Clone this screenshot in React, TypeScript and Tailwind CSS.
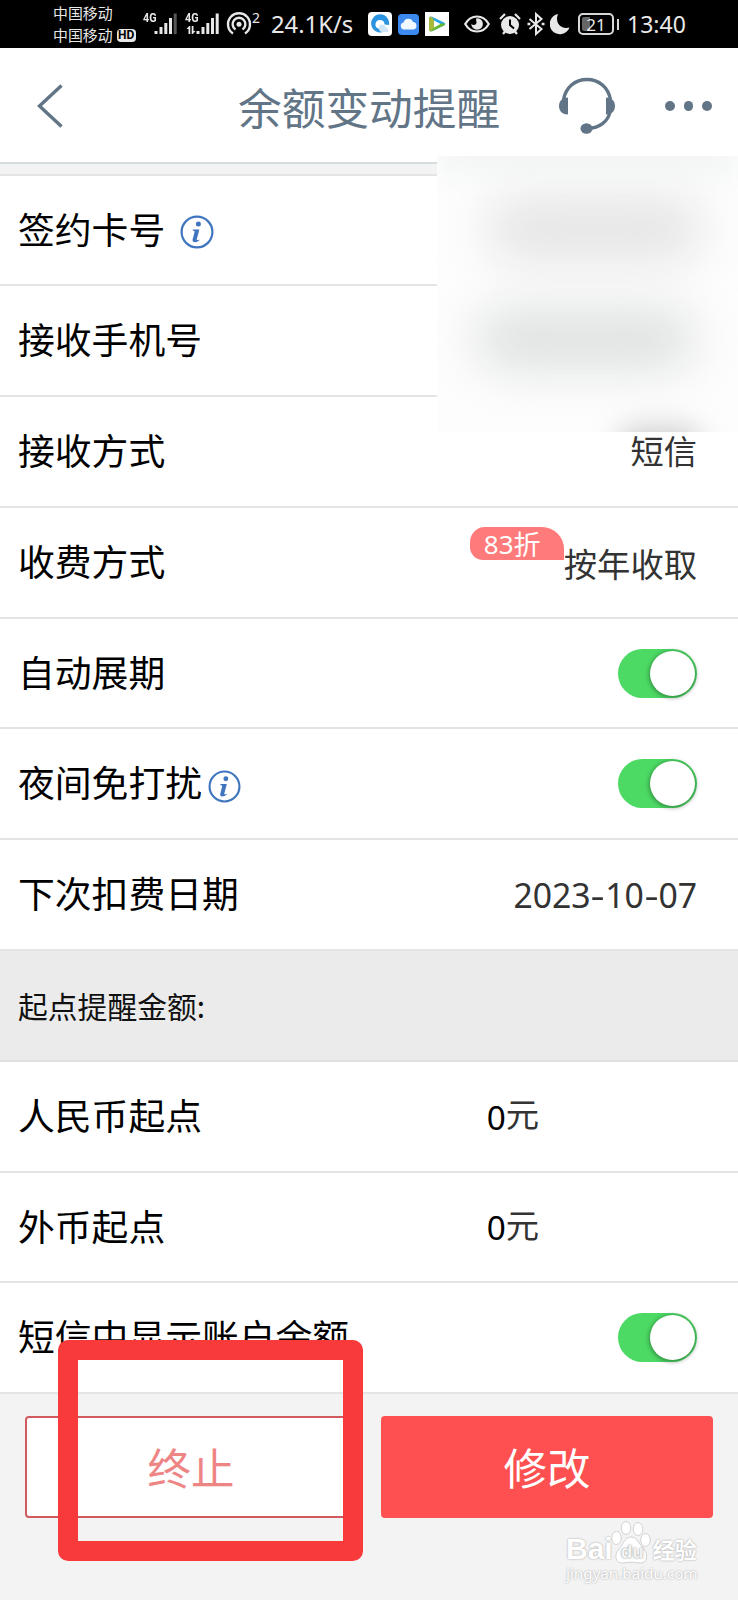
import type { ReactNode } from "react";

function InfoIcon({ className }: { className?: string }) {
  return (
    <svg viewBox="0 0 34 34" fill="none" aria-hidden className={className}>
      <circle cx="17" cy="17" r="15.4" stroke="#3f75bf" strokeWidth="2.2" />
      <circle cx="18.4" cy="9" r="2.5" fill="#3f75bf" />
      <path
        d="M12.8 14.4h6.6l-2.6 9.8c-.3 1.2.7 1.1 2.3.3l.3.8c-1.7 1.3-3 1.9-4.5 1.9-2 0-2.7-1.2-2.2-3.1l1.8-6.9c.3-1.2-.2-1.6-1.9-1.7z"
        fill="#3f75bf"
      />
    </svg>
  );
}

function HeadsetIcon({ className }: { className?: string }) {
  return (
    <svg viewBox="0 0 58 58" fill="none" aria-hidden className={className}>
      <path
        d="M5.5 23C7.5 10.5 17 2.5 29 2.5S50.5 10.5 52.5 23M52 35C50 44.5 41.5 51 30 51.5"
        stroke="#627587"
        strokeWidth="3.4"
      />
      <path d="M10 20.5v17C4.5 37.5 1 34 1 29s3.5-8.5 9-8.5z" fill="#627587" />
      <path d="M48 20.5v17c5.5 0 9-3.5 9-8.5s-3.5-8.5-9-8.5z" fill="#627587" />
      <ellipse cx="28.5" cy="51.5" rx="6" ry="5.2" fill="#627587" />
    </svg>
  );
}

function Signal({ dim }: { dim?: boolean }) {
  return (
    <svg viewBox="0 0 24 24" fill="#e8e8e8" aria-hidden className="h-6 w-6">
      <rect x="0.5" y="19" width="3" height="3" />
      <rect x="5.5" y="15" width="3" height="7" />
      <rect x="10.3" y="11" width="3" height="11" />
      <rect x="15" y="6" width="3" height="16" />
      <rect x="19.7" y="1.5" width="3" height="20.5" fill={dim ? "#555" : "#e8e8e8"} />
    </svg>
  );
}

function StatusBar() {
  return (
    <div className="flex h-12 items-center bg-black pl-[53px] text-[#e8e8e8]">
      <div className="w-[84px] text-[14.9px] leading-[22px]">
        <div>中国移动</div>
        <div className="flex items-center">
          中国移动
          <span className="ml-[4px] flex h-[13px] w-[19px] items-center justify-center rounded-[4px] bg-[#e8e8e8] font-[Roboto] text-[12px] leading-none font-bold text-black">
            HD
          </span>
        </div>
      </div>
      <div className="relative ml-[6px] w-[35px] pl-[11px]">
        <span className="absolute top-0 left-0 origin-left scale-x-90 font-[Roboto] text-[12px] leading-none font-bold">4G</span>
        <Signal dim />
      </div>
      <div className="relative ml-[7px] w-[35px] pl-[11px]">
        <span className="absolute top-0 left-0 origin-left scale-x-90 font-[Roboto] text-[12px] leading-none font-bold">4G</span>
        <svg viewBox="0 0 10 9" fill="#e8e8e8" aria-hidden className="absolute top-[14px] left-[1px] h-[8px] w-[10px]">
          <path d="M0 3.5L3 0h1.2v9H2.2V3.5zM10 5.5L7 9H5.8V0h2v5.5z" />
        </svg>
        <Signal />
      </div>
      <svg viewBox="0 0 26 24" fill="none" stroke="#e8e8e8" strokeWidth="2.4" aria-hidden className="ml-[6px] h-[24px] w-[26px] shrink-0">
        <path d="M7 21.5a11 11 0 1 1 12 0" />
        <path d="M9.5 17.5a6.4 6.4 0 1 1 7 0" />
        <circle cx="13" cy="12.3" r="2.5" fill="#e8e8e8" stroke="none" />
      </svg>
      <span className="-mt-3 w-[12px] font-['Noto_Sans'] text-[14px] leading-none">2</span>
      <span className="ml-[7px] w-[97px] pt-px font-['Noto_Sans'] text-[23.8px] leading-none">24.1K/s</span>

      <svg viewBox="0 0 24 24" aria-hidden className="size-6 shrink-0">
        <rect width="24" height="24" rx="4" fill="#fff" />
        <path d="M16 19.5A9 9 0 1 1 21 13l-4.5-.5a4.5 4.5 0 1 0-5.5 4.3z" fill="#2a94e0" />
        <path d="M11 15c1-3.5 6-3 6.5.5 2.5 0 3.5 2.5 2.5 4.5h-6c-2.5 0-3.5-3-3-5z" fill="#cfe6f8" />
      </svg>
      <svg viewBox="0 0 21 21" aria-hidden className="ml-[6px] size-[21px] shrink-0">
        <rect width="21" height="21" rx="4" fill="#3c8af0" />
        <path d="M6 15.5a3.5 3.5 0 0 1-.5-6.9 5 5 0 0 1 9.5-.6 3.8 3.8 0 0 1 .5 7.5z" fill="#f2f8ff" />
      </svg>
      <svg viewBox="0 0 24 24" aria-hidden className="ml-[6px] size-6 shrink-0">
        <rect width="24" height="24" fill="#fff" />
        <path d="M4 7q0-3.5 3.5-2L19 10.5q2.5 1.5 0 3L7.5 19Q4 20.5 4 17z" fill="#27a7e8" />
        <path d="M6 12l14-.5q.5 1-1 2L7.5 19Q4 20.5 4 17z" fill="#67b82e" />
        <path d="M4 7q0-3 2.5-2.2L9 8v8l-3 3.2q-2 0-2-2.2z" fill="#a8b93a" />
        <path d="M9 8.5l6.5 3.5L9 15.5z" fill="#fff" />
      </svg>

      <svg viewBox="0 0 26 20" fill="none" aria-hidden className="ml-[15px] h-5 w-[26px] shrink-0">
        <path d="M1.2 10C7 0 19 0 24.8 10 19 20 7 20 1.2 10z" stroke="#e8e8e8" strokeWidth="2.2" />
        <path d="M12.5 4.2a5.8 5.8 0 1 1-5.2 5.6c1.5 2.2 5.7 1.2 5.2-1.8-.2-1.4-.8-2.4 0-3.8z" fill="#e8e8e8" />
      </svg>
      <svg viewBox="0 0 24 24" fill="none" aria-hidden className="ml-[8px] size-6 shrink-0">
        <circle cx="12" cy="13" r="9" fill="#e8e8e8" />
        <path d="M2 7l5-5M22 7l-5-5M5 22l2.5-3M19 22l-2.5-3" stroke="#e8e8e8" strokeWidth="2.2" />
        <path d="M12 7.5V13l4 3.5" stroke="#000" strokeWidth="2" />
      </svg>
      <svg viewBox="0 0 18 24" fill="none" stroke="#e8e8e8" strokeWidth="2" aria-hidden className="ml-[5px] h-6 w-[18px] shrink-0">
        <path d="M2.5 7l12 10L9 22V2l5.500 5-12 10" />
        <path d="M.5 12h2.8M14.7 12h2.8" strokeWidth="2.4" />
      </svg>
      <svg viewBox="0 0 20 22" fill="#e8e8e8" aria-hidden className="ml-[5px] h-[22px] w-5 shrink-0">
        <path d="M8 1C5.5 7 8 12 11.5 13.8c2.7 1.4 5.5 1.5 8 .7A10.2 10.2 0 1 1 8 1z" />
      </svg>
      <div className="relative ml-[8px] flex h-[22px] w-[36px] shrink-0 items-center justify-center rounded-[5px] border-2 border-[#d8d8d8] font-['Noto_Sans'] text-[17px] leading-none">
        <span className="absolute inset-y-[2px] left-[2px] w-[8px] rounded-l-[2px] bg-[#666]" />
        <span className="relative">21</span>
      </div>
      <span className="ml-[3px] h-[11px] w-[2px] shrink-0 bg-[#d8d8d8]" />
      <span className="ml-[8px] pt-px font-['Noto_Sans'] text-[23px] leading-none">13:40</span>
    </div>
  );
}

function NavBar() {
  return (
    <div className="flex h-[116px] items-center border-b-2 border-[#d6dde1] bg-white pt-[2px] text-[#627587]">
      <svg viewBox="0 0 26 44" fill="none" stroke="#627587" strokeWidth="3.4" aria-hidden className="ml-[37px] h-[44px] w-[26px]">
        <path d="M24.5 1.5L2.5 22l22 20.5" />
      </svg>
      <h1 className="ml-[175px] pt-[2px] text-[43.7px] leading-none font-normal whitespace-nowrap">余额变动提醒</h1>
      <HeadsetIcon className="ml-[58px] size-[58px]" />
      <div className="ml-[49px] flex gap-[9px]">
        <span className="size-[9.5px] rounded-full bg-[#627587]" />
        <span className="size-[9.5px] rounded-full bg-[#627587]" />
        <span className="size-[9.5px] rounded-full bg-[#627587]" />
      </div>
    </div>
  );
}

function Row({ label, icon, children }: { label: string; icon?: ReactNode; children?: ReactNode }) {
  return (
    <div className="flex h-[110.8px] items-center border-b-2 border-[#e4e4e4] bg-white pr-[41px] pl-[18px] text-[36.8px] leading-none text-black">
      <span className="-mt-[4px] whitespace-nowrap">{label}</span>
      {icon}
      <div className="ml-auto flex items-center text-[33.3px] text-[#333]">{children}</div>
    </div>
  );
}

function Toggle() {
  return (
    <div className="flex h-[49px] w-[79px] items-center justify-end rounded-full bg-[#4cd964] pr-[2px]">
      <span className="size-[45px] rounded-full bg-white shadow-[0_1px_4px_1px_rgba(0,0,0,0.35)]" />
    </div>
  );
}

function Amount() {
  return (
    <div className="mr-[158px] flex items-center">
      <span className="pt-[2px] font-['Noto_Sans'] text-black">0</span>
      <span className="-mt-[7px]">元</span>
    </div>
  );
}

function Dash() {
  return <span className="mx-[2px] inline-block scale-x-130">-</span>;
}

function Watermark() {
  return (
    <div className="absolute top-[1517px] left-[566px] w-[134px] text-white [text-shadow:0_0_2px_#999]">
      <div className="flex h-[48px] items-end">
        <span className="font-['Liberation_Sans'] text-[30px] leading-[32px] font-bold">Bai</span>
        <div className="relative -ml-[2px] h-[46px] w-[40px] shrink-0">
          <svg viewBox="0 0 40 46" fill="#fff" stroke="#d2d2d2" strokeWidth="1" aria-hidden className="h-[46px] w-[40px]">
            <ellipse cx="5.5" cy="19" rx="4.8" ry="6.5" />
            <ellipse cx="15" cy="9" rx="4.8" ry="6.5" />
            <ellipse cx="27" cy="10" rx="4.8" ry="6.5" />
            <ellipse cx="34.5" cy="21" rx="4.8" ry="6.5" />
            <path d="M20 18c-6 0-8 8-12 12-6 6-3 15 4 14 5-1 11-1 16 0 8 1 10-8 5-14-5-5-7-12-13-12z" />
          </svg>
          <span className="absolute top-[23px] left-[10px] font-['Liberation_Sans'] text-[19px] leading-none font-bold text-[#f4f4f4] [text-shadow:0_0_2px_#777]">du</span>
        </div>
        <span className="ml-[2px] text-[22px] leading-[33px] font-bold">经验</span>
      </div>
      <div className="-mt-[2px] font-['Noto_Sans'] text-[15.2px] leading-[20px]">jingyan.baidu.com</div>
    </div>
  );
}

export default function App() {
  return (
    <div className="relative h-[1600px] w-[738px] overflow-hidden bg-[#f3f3f3] font-['Noto_Sans_CJK_SC',sans-serif]">
      <StatusBar />
      <NavBar />
      <div className="h-[11.5px] border-b-2 border-[#e4e4e4] bg-[#f3f3f3]" />

      <Row label="签约卡号" icon={<InfoIcon className="mt-[5px] ml-[15px] size-[34px]" />} />
      <Row label="接收手机号" />
      <Row label="接收方式">
        <span className="-mt-[3px]">短信</span>
      </Row>
      <Row label="收费方式">
        <span className="-mt-[37px] flex h-[33px] w-[94px] items-center rounded-tl-[15px] rounded-tr-[22px] rounded-bl-[13px] bg-[#ff7a7a] pl-[14px] text-[27px] text-white">
          <span className="font-['Noto_Sans'] text-[26px]">83</span>折
        </span>
        按年收取
      </Row>
      <Row label="自动展期">
        <Toggle />
      </Row>
      <Row label="夜间免打扰" icon={<InfoIcon className="mt-[6px] ml-[6px] size-[33px]" />}>
        <Toggle />
      </Row>
      <Row label="下次扣费日期">
        <span className="pt-[3px] font-['Noto_Sans'] text-[33.8px] tracking-[-0.1px]">
          2023
          <Dash />
          10
          <Dash />
          07
        </span>
      </Row>
      <div className="flex h-[110.8px] items-center border-b-2 border-[#e0e0e0] bg-[#ebebeb] pl-[18px] text-[29.8px] text-[#111]">
        起点提醒金额:
      </div>
      <Row label="人民币起点">
        <Amount />
      </Row>
      <Row label="外币起点">
        <Amount />
      </Row>
      <Row label="短信中显示账户余额">
        <Toggle />
      </Row>

      <div className="grid grid-cols-2 gap-[24px] px-[25px] pt-[22px] text-[43.5px]">
        <button className="h-[102px] rounded-[4px] border-2 border-[#d05a5e] bg-white pb-px text-[#ee8585]">终止</button>
        <button className="h-[102px] rounded-[4px] bg-[#fe5050] pb-px text-white">修改</button>
      </div>

      {/* zone floutée sur le numéro de carte et le téléphone */}
      <div className="absolute top-[156px] left-[437px] h-[276px] w-[301px] overflow-hidden bg-[#fdfdfd]">
        <div className="absolute -top-4 left-0 h-9 w-full bg-[#f4f6f6] blur-[12px]" />
        <div className="absolute top-[42px] left-[50px] h-[62px] w-[215px] rounded-full bg-[#e4e4e4] blur-[24px]" />
        <div className="absolute top-[152px] left-[38px] h-[62px] w-[220px] rounded-full bg-[#dfe1e1] blur-[24px]" />
        <div className="absolute top-[270px] left-[180px] h-[40px] w-[85px] rounded-full bg-[#d0d0d0] blur-[14px]" />
      </div>

      {/* cadre rouge autour du bouton */}
      <div className="absolute top-[1340px] left-[58px] h-[221px] w-[305px] rounded-[10px] border-[20px] border-[#f83a3a]" />
      <Watermark />
    </div>
  );
}
